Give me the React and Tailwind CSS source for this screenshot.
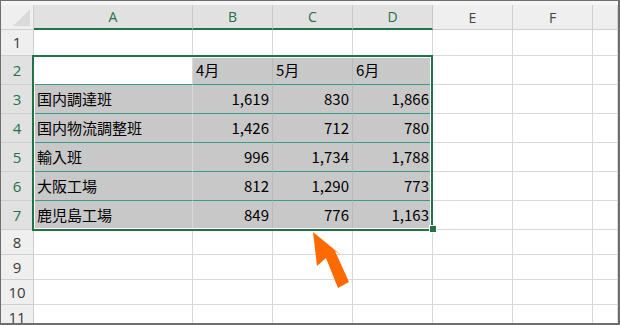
const columns = [
  { key: "A", selected: true },
  { key: "B", selected: true },
  { key: "C", selected: true },
  { key: "D", selected: true },
  { key: "E", selected: false },
  { key: "F", selected: false },
  { key: "G", selected: false },
];

const tableRows = [
  { label: "", values: ["4月", "5月", "6月"], header: true },
  { label: "国内調達班", values: ["1,619", "830", "1,866"] },
  { label: "国内物流調整班", values: ["1,426", "712", "780"] },
  { label: "輸入班", values: ["996", "1,734", "1,788"] },
  { label: "大阪工場", values: ["812", "1,290", "773"] },
  { label: "鹿児島工場", values: ["849", "776", "1,163"] },
];

const emptyCell = "border-r border-b border-[#d9d9d9]";

function RowHeader({ n, selected }) {
  return (
    <div
      className={`flex items-center justify-center border-r border-b border-[#cfcfcf] font-['Open_Sans',sans-serif] text-[15px] ${
        selected ? "bg-[#e1e1e1] text-[#217346]" : "bg-[#efefef] text-[#3a3a3a]"
      }`}
    >
      {n}
    </div>
  );
}

function EmptyRow({ n, height }) {
  return (
    <div className={`grid grid-cols-[33px_159px_80px_80px_80px_80px_80px_1fr] ${height}`}>
      <RowHeader n={n} />
      {columns.map((col) => (
        <div key={col.key} className={emptyCell} />
      ))}
    </div>
  );
}

export default function App() {
  return (
    <div className="relative h-[325px] w-[620px] overflow-hidden border border-r-2 border-b-2 border-[#6e6e6e] bg-white font-['Noto_Sans_CJK_JP',sans-serif] text-black">
      <div className="h-[4px] bg-[#f6f6f6]" />

      {/* column headers */}
      <div className="grid h-[25px] grid-cols-[33px_159px_80px_80px_80px_80px_80px_1fr]">
        <div className="relative border-r border-b border-[#cfcfcf] bg-[#efefef]">
          <svg width="33" height="25" className="absolute left-0 top-0">
            <polygon points="29,4 29,21 12,21" fill="#dadada" />
          </svg>
        </div>
        {columns.map((col) => (
          <div
            key={col.key}
            className={`flex items-center justify-center font-['Open_Sans',sans-serif] text-[14px] ${
              col.selected
                ? "border-r border-b-2 border-r-[#c9c9c9] border-b-[#217346] bg-[#e1e1e1] text-[#217346]"
                : "border-r border-b border-[#cfcfcf] bg-[#efefef] text-[#444]"
            }`}
          >
            {col.key === "G" ? "" : col.key}
          </div>
        ))}
      </div>

      <EmptyRow n={1} height="h-[26px]" />

      {tableRows.map((row, i) => (
        <div
          key={i}
          className="grid h-[29px] grid-cols-[33px_159px_80px_80px_80px_80px_80px_1fr] text-[15px]"
        >
          <RowHeader n={i + 2} selected />
          <div
            className={`flex items-center border-r border-b border-r-[#d9d9d9] border-b-[#3a9a8c] pl-[3px] ${
              row.header ? "bg-white" : "bg-[#c8c8c8]"
            }`}
          >
            {row.label}
          </div>
          {row.values.map((v, j) => (
            <div
              key={j}
              className={`flex items-center border-r border-b border-r-[#b9b9b9] border-b-[#3a9a8c] bg-[#c8c8c8] ${
                row.header ? "justify-start pl-[3px]" : "justify-end pr-[3px]"
              }`}
            >
              {v}
            </div>
          ))}
          <div className={emptyCell} />
          <div className={emptyCell} />
          <div className={emptyCell} />
        </div>
      ))}

      <EmptyRow n={8} height="h-[25px]" />
      <EmptyRow n={9} height="h-[25px]" />
      <EmptyRow n={10} height="h-[25px]" />
      <EmptyRow n={11} height="h-[25px]" />

      {/* selection frame */}
      <div className="pointer-events-none absolute left-[31px] top-[54px] h-[176px] w-[401px] border-2 border-[#217346] shadow-[inset_0_0_0_1px_#ffffff]" />
      <div className="absolute left-[428px] top-[224px] h-[8px] w-[8px] border border-white bg-[#217346]" />

      {/* arrow */}
      <svg
        width="620"
        height="325"
        className="pointer-events-none absolute left-[-1px] top-[-1px]"
      >
        <polygon
          points="313,232 317,266 326,258 338,288 349,282 335,251 341,255"
          fill="#ff6a00"
        />
      </svg>
    </div>
  );
}
